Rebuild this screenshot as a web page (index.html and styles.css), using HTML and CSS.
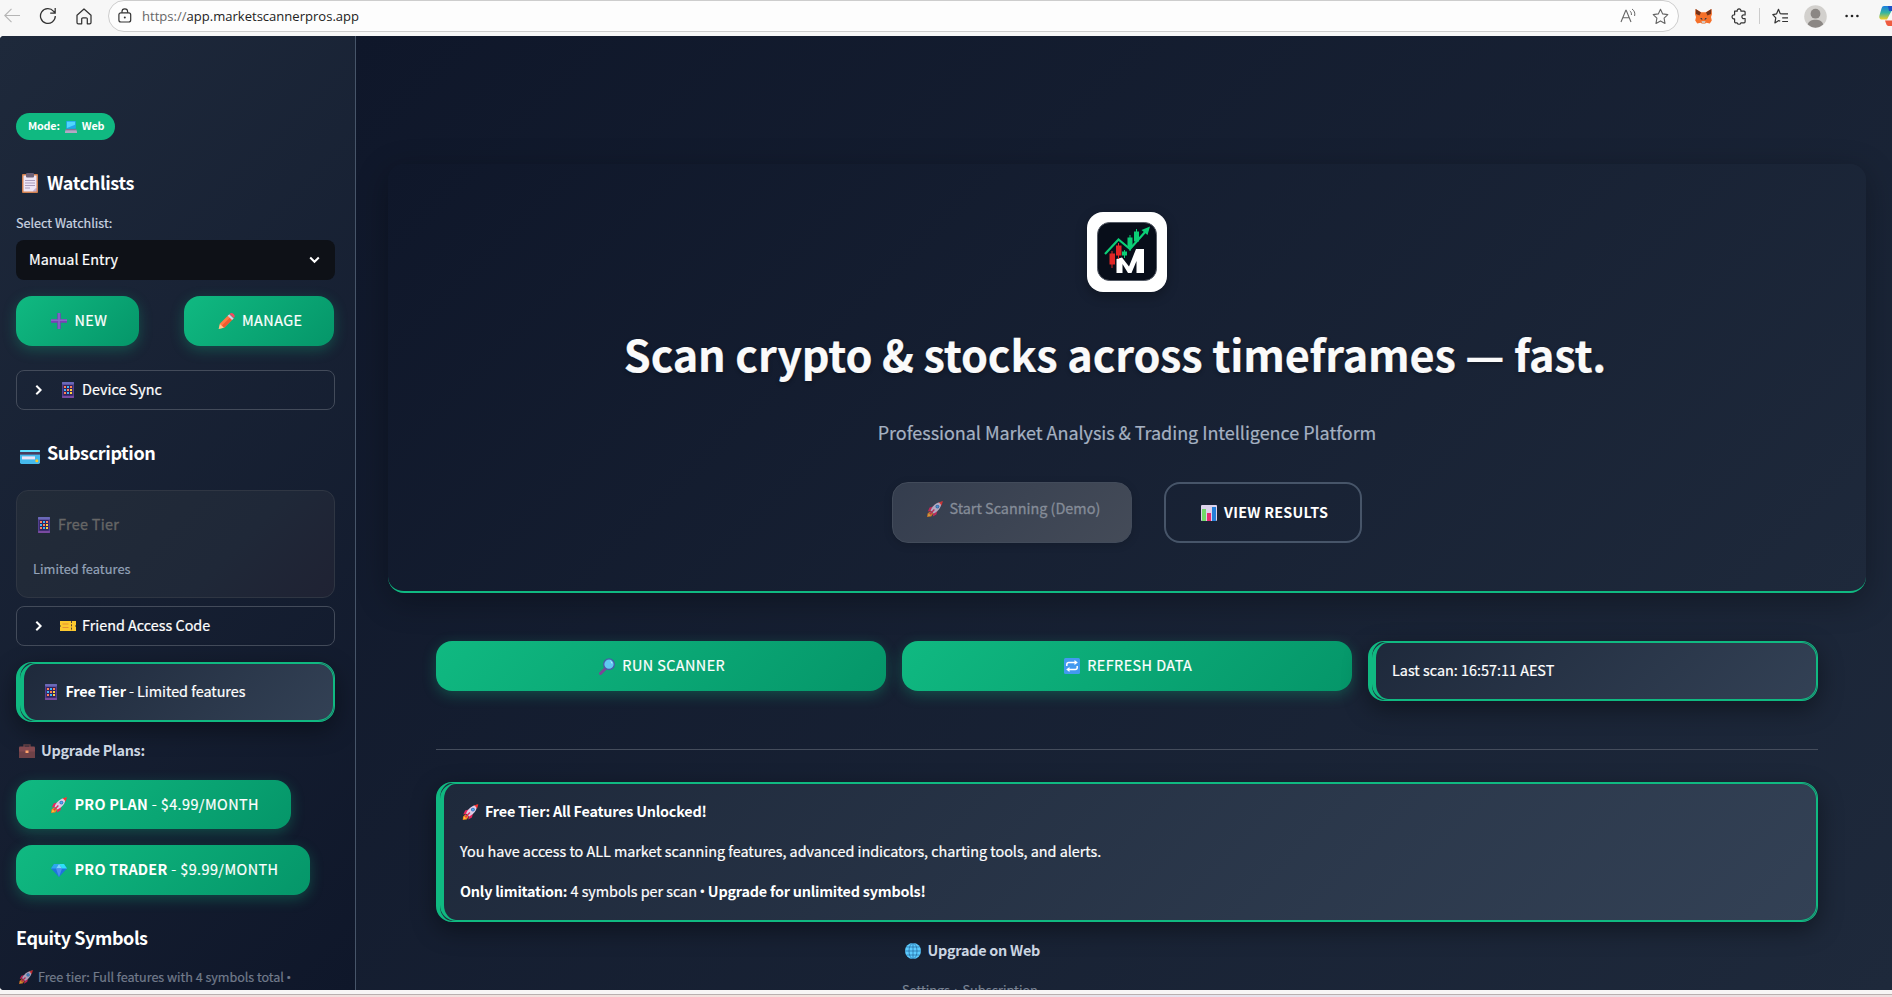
FILE: index.html
```html
<!DOCTYPE html>
<html lang="en">
<head>
<meta charset="utf-8">
<title>Market Scanner Pros</title>
<link rel="stylesheet" href="styles.css">
</head>
<body>
<svg class="defs" width="0" height="0">
  <defs>
    <symbol id="rocket" viewBox="0 0 16 16">
      <path d="M3.2 10.2 .6 12.6 0 16l4.2-.6 2-2.8z" fill="#f58220"/><path d="M1.6 12.6 1 15.2l2.6-.8z" fill="#ffc83d"/>
      <path d="M6.2 5.6 2.6 6.6.8 10.4l3.6-.6zM10.4 9.8 9.4 13.4 5.8 15.6l.6-4z" fill="#e8265e"/>
      <path d="M3.6 9.4C5.4 5 9 1.6 14.6.8 14.6 6.4 11 10.6 6.6 12.4z" fill="#dccde6"/>
      <path d="M11.4 1.6 16 0l-1.5 4.8C14 3.4 12.8 2.2 11.4 1.6z" fill="#f8312f"/>
      <circle cx="10.4" cy="5.6" r="1.9" fill="#3b6fc4"/><circle cx="10.4" cy="5.6" r="1.1" fill="#4db5f0"/>
      <path d="M7.4 8.6 3 13" stroke="#e8265e" stroke-width="1.4"/>
    </symbol>
    <symbol id="phone" viewBox="0 0 12 16">
      <rect width="12" height="16" rx="1" fill="#52408f"/><rect x="0" y="0" width="12" height="2.4" rx=".8" fill="#6a69b8"/><rect x="1.3" y="3" width="9.4" height="10.6" fill="#32235c"/><rect y="14" width="12" height="2" rx=".8" fill="#7a4aa0"/>
      <g fill="#ff8257"><rect x="2" y="4" width="2" height="2"/><rect x="8" y="4" width="2" height="2"/><rect x="5" y="7" width="2" height="2"/><rect x="2" y="10" width="2" height="2"/></g>
      <g fill="#3fb8f5"><rect x="5" y="4" width="2" height="2"/><rect x="2" y="7" width="2" height="2"/><rect x="5" y="10" width="2" height="2"/></g>
      <g fill="#ffd23e"><rect x="8" y="7" width="2" height="2"/><rect x="8" y="10" width="2" height="2"/></g>
    </symbol>
  </defs>
</svg>

<header class="browser">
  <svg class="b-back" width="16" height="16" viewBox="0 0 16 16"><path d="M16 7.5H.8M7.5 .8.8 7.5l6.7 6.7" fill="none" stroke="#b5b5b5" stroke-width="1.1"/></svg>
  <svg class="b-reload" width="18" height="18" viewBox="0 0 18 18"><path d="M16.3 9A7.4 7.4 0 1 1 14.6 4.3L16.2 6M16.2 1v5h-5" fill="none" stroke="#333" stroke-width="1.25"/></svg>
  <svg class="b-home" width="16" height="17" viewBox="0 0 16 17"><path d="M1 7.2 8 1l7 6.2v7.3a1.3 1.3 0 0 1-1.3 1.3h-2.4V11a1.2 1.2 0 0 0-1.2-1.2H6.900A1.2 1.2 0 0 0 5.700 11v4.800H2.300A1.3 1.3 0 0 1 1 14.500z" fill="none" stroke="#333" stroke-width="1.25" stroke-linejoin="round"/></svg>
  <div class="address">
    <svg width="14" height="16" viewBox="0 0 14 16"><rect x=".9" y="4.8" width="11.800" height="9.200" rx="2" fill="none" stroke="#333" stroke-width="1.2"/><path d="M4 4.800V3.600a2.800 2.800 0 0 1 5.600 0v1.200" fill="none" stroke="#333" stroke-width="1.200"/><circle cx="6.800" cy="9.400" r="1" fill="#333"/></svg>
    <div class="url"><span class="scheme">https://</span>app.marketscannerpros.app</div>
    <svg class="b-read" width="17" height="16" viewBox="0 0 17 16"><path d="M1 14 5.800 2.200h.4L11 14M2.800 9.800h6.400" fill="none" stroke="#666" stroke-width="1.100"/><path d="M9.800 3c1.400.8 1.800 2.300 1.600 4M12 1c2.200 1.400 3.400 4 2.600 7" fill="none" stroke="#666" stroke-width="1"/></svg>
    <svg width="17" height="17" viewBox="0 0 17 17"><path d="m8.500 1.200 2.200 4.700 5.100.7-3.700 3.600.9 5.200-4.500-2.500L4 15.400l.9-5.200L1.200 6.600l5.100-.7z" fill="none" stroke="#666" stroke-width="1.100" stroke-linejoin="round"/></svg>
  </div>
  <svg class="b-fox" width="17" height="15" viewBox="0 0 17 15"><path d="m.6 0 5.600 3.200h4.600L16.400 0 17 5l-1 3 .8 3.500-2 3-3.400-.8-1.600 1H7.200l-1.600-1-3.400.8-2-3L1 8 0 5z" fill="#f5702a"/><path d="M.6 0 6 3.400 4.500 6.600 1 5zM16.400 0 11 3.400l1.500 3.200L16 5z" fill="#73321b"/><path d="M5 9.500 7 9l.4 2zM12 9.500 10 9l-.4 2z" fill="#25344d"/><path d="M6.500 12h4l-.6 2.600H7.100z" fill="#d6c5bb"/></svg>
  <svg class="b-ext" width="16" height="17" viewBox="0 0 16 17"><path d="M3.600 3.200h2.600a1.900 1.900 0 1 1 3.700 0h3.200a1 1 0 0 1 1 1V7h-1a1.800 1.800 0 1 0 0 3.500h1v3.300a1 1 0 0 1-1 1H9.900a1.900 1.900 0 0 1-3.700 0H4.600a1 1 0 0 1-1-1v-2.900a2.100 2.100 0 1 1 0-4.100z" fill="none" stroke="#333" stroke-width="1.200" stroke-linejoin="round"/></svg>
  <i class="b-divider"></i>
  <svg class="b-fav" width="17" height="17" viewBox="0 0 17 17"><path d="M10.500 5.800 8.200 5.600 6.500 1.300 4.600 5.800.8 6.600l3 3.300-.9 5 3.900-2.400 1.400.8M10.500 5.800H16M10.200 9.800H16M10.200 13.500H16" fill="none" stroke="#333" stroke-width="1.200" stroke-linejoin="round"/></svg>
  <svg class="b-user" width="23" height="23" viewBox="0 0 23 23"><circle cx="11.500" cy="11.500" r="11.300" fill="#d2d0cd"/><circle cx="11.500" cy="8.700" r="4.900" fill="#8b8784"/><path d="M3.800 19.600C4.600 16 8 14.800 11.500 14.800s6.900 1.200 7.700 4.800a11.300 11.300 0 0 1-15.400 0z" fill="#8b8784"/></svg>
  <svg class="b-more" width="14" height="4" viewBox="0 0 14 4"><g fill="#222"><circle cx="1.600" cy="2" r="1.300"/><circle cx="7" cy="2" r="1.300"/><circle cx="12.400" cy="2" r="1.300"/></g></svg>
  <svg class="b-copilot" width="13" height="20" viewBox="0 0 13 20"><defs><linearGradient id="cp" x2="0" y2="1"><stop offset="0" stop-color="#1b7fe0"/><stop offset=".5" stop-color="#35b5a0"/><stop offset="1" stop-color="#f5cf22"/></linearGradient></defs><path d="M5 0h8v4L8 13.500H3C0 13.500 0 11 .6 9L2.500 2.500C3 .8 3.800 0 5 0z" fill="url(#cp)"/><path d="M9 0h4v5h-3z" fill="#1d50c5"/><path d="M6 14.500h7V20H9.500C7.500 20 7 17 6 14.500z" fill="#ee5b3f"/></svg>
</header>

<div class="app">
  <aside class="sidebar">
    <div class="mode"><span>Mode:</span>
      <svg width="12" height="12" viewBox="0 0 12 12"><rect x="1.200" width="9.600" height="7.800" rx=".6" fill="#23a5ee"/><path d="M2 .8h8v3L2 7z" fill="#4fd6ff"/><path d="M1 8h10l1 2.500V12H0v-1.500z" fill="#b3a8c4"/><path d="M1 8.300h10l.5 1H.5z" fill="#6e6488"/></svg>
      <span>Web</span></div>
    <h3 class="side-title watch">
      <svg width="16" height="20" viewBox="0 0 16 20"><rect y="1" width="16" height="19" rx="1" fill="#d28150"/><path d="M1.500 2.500h13V15L11 18.500H1.500z" fill="#eee6f6"/><path d="M14.500 14.500V18.500H10.500z" fill="#c3b0d6"/><rect x="4" width="8" height="4.400" rx="1" fill="#6d6177"/><path d="M3 7.500h10M3 10h10M3 12.500h10M3 15h5" stroke="#aa9cbc" stroke-width="1"/></svg>
      <span>Watchlists</span></h3>
    <label class="label">Select Watchlist:</label>
    <div class="select"><span>Manual Entry</span><svg width="11" height="8" viewBox="0 0 11 8"><path d="m1.200 1.500 4.300 4.300 4.300-4.300" fill="none" stroke="#fff" stroke-width="2"/></svg></div>
    <div class="pair">
      <button class="btn new"><svg width="16" height="16" viewBox="0 0 16 16"><path d="M8 0v16M0 8h16" stroke="#7a3fb8" stroke-width="3.400"/><path d="M8 0v16M0 7.300h16" stroke="#8868c8" stroke-width="1.600"/></svg><span>NEW</span></button>
      <button class="btn manage"><svg width="17" height="16" viewBox="0 0 17 16"><path d="M2 10.500 10.500 2l4.200 4.200-8.500 8.500L1 15.800z" fill="#ff7b45"/><path d="M4 12.500 12.500 4l2.200 2.200-8.500 8.500z" fill="#f1592f"/><path d="m9.700 2.800 1.600-1.600 4.400 4.200-1.700 1.600z" fill="#d8cce5"/><path d="M11.600 1c1.400-1.600 3-.9 4-.1 1.100 1 1.700 2.600.2 4.200z" fill="#f8485e"/><path d="m1.900 11-1.300 5 5.200-1.300z" fill="#ffc68c"/></svg><span>MANAGE</span></button>
    </div>
    <div class="expander gap24"><svg class="chev" width="8" height="12" viewBox="0 0 8 12"><path d="m1.300 1.700 4.300 4.300-4.300 4.300" fill="none" stroke="#fff" stroke-width="2"/></svg><svg class="e-ico" width="12" height="16"><use href="#phone"/></svg><span>Device Sync</span></div>
    <h3 class="side-title subs">
      <svg width="20" height="14" viewBox="0 0 20 14"><rect width="20" height="14" rx="1.400" fill="#45b9ec"/><rect width="20" height="2" rx="1" fill="#61dfff"/><rect y="2" width="20" height="2.600" fill="#4a3b5c"/><rect x="2" y="6.400" width="13" height="3" fill="#ece4f5"/><circle cx="16.800" cy="10.800" r="1.500" fill="#ffc928"/></svg>
      <span>Subscription</span></h3>
    <div class="tier-card">
      <div class="tier-name"><svg width="12" height="16"><use href="#phone"/></svg><span>Free Tier</span></div>
      <div class="tier-note">Limited features</div>
    </div>
    <div class="expander gap8"><svg class="chev" width="8" height="12" viewBox="0 0 8 12"><path d="m1.300 1.700 4.300 4.300-4.300 4.300" fill="none" stroke="#fff" stroke-width="2"/></svg><svg class="e-ico" width="16" height="10" viewBox="0 0 16 10"><path d="M0 0h16v4.200a.8.8 0 0 0 0 1.600V10H0V5.800a.8.8 0 0 0 0-1.600z" fill="#fcc92f"/><path d="M11.500 0v10" stroke="#54433c" stroke-dasharray="2 1.300"/><path d="M2.500 3h6M2.500 6.500h6" stroke="#e58f35" stroke-width="1.200"/></svg><span>Friend Access Code</span></div>
    <div class="alert side-alert"><div class="alert-in"><svg width="12" height="16"><use href="#phone"/></svg><span><b>Free Tier</b> - Limited features</span></div></div>
    <div class="plans"><svg width="16" height="14" viewBox="0 0 16 14"><path d="M5 3V1h6v2" fill="none" stroke="#664044" stroke-width="1.400"/><rect y="2.500" width="16" height="11.500" rx="1" fill="#834a50"/><path d="M0 7.500h16V14H0z" fill="#6e4147"/><rect x="6.500" y="6.500" width="3" height="2.500" fill="#ffa36a"/></svg><span>Upgrade Plans:</span></div>
    <button class="btn pro"><svg width="16" height="16"><use href="#rocket"/></svg><span><b>PRO PLAN</b> - $4.99/MONTH</span></button>
    <button class="btn trader"><svg width="16" height="13" viewBox="0 0 16 13"><path d="M3 0h10l3 4.500L8 13 0 4.500z" fill="#1f74dd"/><path d="M3 0h5L5 4.500H0z" fill="#2ca8ee"/><path d="M8 0h5l3 4.500h-5z" fill="#2de0f5"/><path d="m8 0 3 4.500H5z" fill="#79d4ff"/><path d="M5 4.500h6L8 13z" fill="#4b8ff0"/></svg><span><b>PRO TRADER</b> - $9.99/MONTH</span></button>
    <h3 class="side-title equity"><span>Equity Symbols</span></h3>
    <div class="foot"><svg width="14" height="14"><use href="#rocket"/></svg><div>Free tier: Full features with 4 symbols total <i class="dot">•</i></div></div>
  </aside>

  <main class="main">
    <section class="hero">
      <div class="logo"><svg width="60" height="59" viewBox="0 0 60 59">
        <rect x=".5" y=".5" width="59" height="58" rx="12" fill="#080e1a" stroke="#555b66"/>
        <path d="M19.500 51V37l5.500-1.500 7 9 7-17.500h8V51h-7.500V39L34.500 51h-3.500l-5.500-9v9z" fill="#fff"/>
        <g fill="#e22626" stroke="#e22626"><path d="M15 29v17M21.500 21v16"/><rect x="13" y="32" width="4.500" height="10"/><rect x="19.500" y="24" width="4.500" height="9"/></g>
        <g fill="#0bcf76" stroke="#0bcf76"><path d="M27.500 28v8M33 13v16M39.500 7v13"/><rect x="25.500" y="30" width="4" height="3"/><rect x="31" y="16" width="4" height="9"/><rect x="37.500" y="10" width="4" height="9"/></g>
        <path d="m8 32 13.500-14.500L33 27 49 9" fill="none" stroke="#0bcf76" stroke-width="2.200"/><path d="m44.500 8 8.500-3.500-2.500 8.500z" fill="#0bcf76"/>
      </svg></div>
      <h1 class="hero-title">Scan crypto &amp; stocks across timeframes — fast.</h1>
      <p class="hero-sub">Professional Market Analysis &amp; Trading Intelligence Platform</p>
      <div class="hero-actions">
        <div class="demo"><svg width="16" height="16"><use href="#rocket"/></svg><span>Start Scanning (Demo)</span></div>
        <div class="results"><svg width="16" height="16" viewBox="0 0 16 16"><rect width="16" height="16" rx="1" fill="#ddd3ec"/><rect x="1" y="4" width="4" height="12" fill="#71d968"/><rect x="6" y="8" width="4" height="8" fill="#e52b70"/><rect x="11" y="2" width="4" height="14" fill="#257ed8"/></svg><span>VIEW RESULTS</span></div>
      </div>
    </section>
    <div class="content">
      <div class="actions">
        <button class="btn wide"><svg width="16" height="17" viewBox="0 0 16 17"><path d="m1.500 15.500 5-5" stroke="#7d4597" stroke-width="3" stroke-linecap="round"/><circle cx="10" cy="6.200" r="5.300" fill="#5fc9f2" stroke="#4a5ba8" stroke-width="1.300"/><path d="M11.500 3a3 3 0 0 1 1.500 2.500" stroke="#c9f3ff" fill="none"/></svg><span>RUN SCANNER</span></button>
        <button class="btn wide"><svg width="16" height="16" viewBox="0 0 16 16"><rect width="16" height="16" rx="1.500" fill="#4299f0"/><path d="M2.800 8V6.500a2 2 0 0 1 2-2H12M13.200 8v1.500a2 2 0 0 1-2 2H4" fill="none" stroke="#fff" stroke-width="1.500"/><path d="m10.500 2 3.300 2.500L10.500 7zM5.500 9l-3.300 2.500L5.500 14z" fill="#fff"/></svg><span>REFRESH DATA</span></button>
        <div class="alert"><div class="alert-in scan"><span>Last scan: 16:57:11 AEST</span></div></div>
      </div>
      <div class="rule"></div>
      <div class="alert info"><div class="alert-in col">
        <div class="info-row head"><svg width="17" height="16" viewBox="0 0 16 16"><use href="#rocket"/></svg><b>Free Tier: All Features Unlocked!</b></div>
        <div class="info-row">You have access to ALL market scanning features, advanced indicators, charting tools, and alerts.</div>
        <div class="info-row"><b>Only limitation:</b> 4 symbols per scan <i class="dot">•</i> <b>Upgrade for unlimited symbols!</b></div>
      </div></div>
      <div class="web"><svg width="16" height="16" viewBox="0 0 16 16"><circle cx="8" cy="8" r="8" fill="#5ccbff"/><path d="M8 0v16M0 8h16M1.500 4h13M1.500 12h13" stroke="#1c5a90" stroke-width=".6"/><ellipse cx="8" cy="8" rx="4" ry="7.800" fill="none" stroke="#1c5a90" stroke-width=".6"/></svg><span>Upgrade on Web</span></div>
      <div class="settings">Settings <i class="sep">›</i> Subscription</div>
    </div>
  </main>
</div>
<footer class="edge"></footer>
</body>
</html>
```

FILE: styles.css
```css
* { box-sizing: border-box; }
body { margin: 0; width: 1892px; height: 997px; overflow: hidden; font-family: "Noto Sans CJK SC", "Noto Sans", sans-serif; font-size: 14.4px; color: #fff; background: #f7f7f7; -webkit-text-stroke: .2px; }
h1, h3, p { margin: 0; }
svg { display: block; flex: none; }
.defs { display: none; }
span, b, h1, label { white-space: nowrap; }
b { font-weight: 700; letter-spacing: -.22px; -webkit-text-stroke: 0; }
i { font-style: normal; }
.dot { font-family: "Open Sans", sans-serif; font-size: 1.050em; line-height: 1; margin: 0 -.55px; }
.sep { font-family: "Open Sans", sans-serif; line-height: 1; padding: 0 1.500px; }

.browser { display: flex; align-items: center; height: 36px; background: #f7f7f7; padding-left: 4px; padding-bottom: 4px; }
.b-reload { margin-left: 19px; }
.b-home { margin-left: 19px; }
.address { display: flex; flex: none; align-items: center; align-self: flex-start; width: 1571px; height: 32px; margin-left: 16px; padding: 0 9px; background: #fdfdfd; border: 1px solid #cdcdcd; border-radius: 16px; }
.url { flex: 1; margin-left: 10px; font-family: "Open Sans", sans-serif; font-size: 13.050px; color: #222; -webkit-text-stroke: 0; }
.scheme { color: #666; }
.b-read { margin-right: 15px; }
.b-fox { margin-left: 16px; }
.b-ext { margin-left: 19px; }
.b-divider { width: 1px; height: 16px; margin-left: 12px; background: #ccc; }
.b-fav { margin-left: 12px; }
.b-user { margin-left: 15px; }
.b-more { margin-left: 18px; }
.b-copilot { margin-left: 20px; }

.app { display: flex; height: 954px; overflow: hidden; border-radius: 4px 0 0 4px; background: #0f172a; }
.sidebar { width: 356px; height: 954px; flex: none; overflow: hidden; padding: 77px 20px 0 16px; border-right: 1px solid #475569; background: linear-gradient(135deg, #1e293b 0%, #0f172a 100%); }
.mode { display: flex; align-items: center; gap: 5px; width: 99px; height: 27px; padding-left: 12px; border-radius: 14px; background: #10b981; font-size: 10.8px; font-weight: 700; line-height: 25px; letter-spacing: -.2px; -webkit-text-stroke: 0; }
.mode span { padding-bottom: 2px; }
.side-title { display: flex; align-items: center; height: 28px; font-size: 18px; font-weight: 700; line-height: 26px; letter-spacing: -.36px; -webkit-text-stroke: 0; }
.side-title span, .select span, .btn span, .expander span, .tier-name span, .alert-in span, .plans span, .web span, .results span, .head b { padding-bottom: 2px; }
.watch { margin-top: 29px; padding-left: 6px; gap: 9px; }
.subs { margin-top: 30px; padding-left: 4px; gap: 7px; }
.subs svg { margin-top: 5px; }
.side-title.subs span { padding-bottom: 4px; }
.equity { margin-top: 29px; letter-spacing: -.44px; }
.label { display: block; height: 20px; margin-top: 16px; font-size: 12.6px; line-height: 20px; color: #cbd5e1; }
.select { display: flex; align-items: center; justify-content: space-between; width: 319px; height: 40px; margin-top: 7px; padding: 0 15px 0 13px; border-radius: 8px; background: #0e1117; line-height: 38px; }
.pair { display: flex; justify-content: space-between; width: 318px; margin-top: 16px; }
.btn { display: flex; align-items: center; height: 50px; margin: 0; padding: 0 0 0 35px; gap: 7.500px; border: 0; border-radius: 16px; background: linear-gradient(135deg, #10b981 0%, #059669 100%); box-shadow: 0 4px 14px rgba(16, 185, 129, .3); color: #fff; font-family: inherit; font-size: 14.4px; line-height: 24px; letter-spacing: .43px; -webkit-text-stroke: .2px; }
.btn b { letter-spacing: .24px; }
.new { width: 123px; }
.manage { width: 150px; padding-left: 34px; gap: 7px; }
.expander { display: flex; align-items: center; width: 319px; height: 40px; padding-left: 18px; border: 1px solid #434b5a; border-radius: 8px; line-height: 36px; }
.gap24 { margin-top: 24px; }
.gap8 { margin-top: 8px; }
.e-ico { margin-left: 19px; margin-right: 8px; }
.gap8 .e-ico { margin-left: 17px; margin-right: 6px; }
.tier-card { width: 319px; height: 108px; margin-top: 22px; padding: 22px 16px 0; border: 1px solid #2f3643; border-radius: 12px; background: linear-gradient(135deg, #222b38, #1f2838 65%, #1f2233); }
.tier-name { display: flex; align-items: center; gap: 8px; height: 24px; padding-left: 5px; line-height: 24px; color: #666; letter-spacing: .3px; -webkit-text-stroke: .35px; }
.tier-note { height: 20px; margin-top: 22px; font-size: 12.8px; line-height: 20px; color: #94a3b8; letter-spacing: .05px; }
.alert { height: 60px; border: 1px solid #10b981; border-left-width: 4px; border-radius: 16px; background: linear-gradient(135deg, #1e293b 0%, #334155 100%); box-shadow: 0 8px 24px rgba(0, 0, 0, .4); }
.alert-in { display: flex; align-items: center; height: 100%; border: 1px solid #10b981; border-left-width: 4px; border-radius: 16px; padding-left: 21px; gap: 8.500px; line-height: 24px; }
.side-alert { width: 319px; margin-top: 16px; letter-spacing: -.03px; }
.plans { display: flex; align-items: center; gap: 6px; height: 24px; margin-top: 17px; padding-left: 3px; line-height: 24px; font-weight: 700; color: #cbd5e1; letter-spacing: -.26px; -webkit-text-stroke: 0; }
.pro { width: 275px; height: 49px; margin-top: 17px; }
.trader { width: 294px; margin-top: 16px; }
.foot { display: flex; align-items: center; gap: 5px; height: 20px; margin-top: 15px; padding-left: 3px; font-size: 12.6px; line-height: 20px; color: #727b8b; white-space: nowrap; letter-spacing: -.03px; }
.foot svg { opacity: .75; }

.main { flex: 1; height: 954px; overflow: hidden; padding: 128px 26px 0 32px; background: linear-gradient(135deg, #0f172a 0%, #1e293b 100%); }
.hero { display: flex; flex-direction: column; align-items: center; height: 429px; padding-top: 48px; border-bottom: 2px solid #10b981; border-radius: 16px; background: linear-gradient(135deg, #0f172a 0%, #1e293b 100%); box-shadow: 0 8px 32px rgba(0, 0, 0, .3); }
.logo { width: 80px; height: 80px; padding: 10px; border-radius: 16px; background: #fff; box-shadow: 0 4px 12px rgba(0, 0, 0, .3); }
.hero-title { height: 58px; margin-top: 35px; padding-right: 24px; font-size: 43.2px; font-weight: 700; line-height: 52px; letter-spacing: -.15px; color: #fafafa; text-shadow: 0 2px 4px rgba(0, 0, 0, .3); }
.hero-sub { height: 30px; margin-top: 33px; font-size: 18px; line-height: 28px; letter-spacing: -.04px; color: #a5b1c2; white-space: nowrap; }
.hero-actions { display: flex; gap: 32px; margin-top: 34px; }
.demo { display: flex; gap: 6.500px; width: 240px; height: 61px; padding: 18px 0 0 34px; border: 1px solid #424b5a; border-radius: 16px; background: linear-gradient(135deg, #343d4e, #444b58); box-shadow: 0 2px 8px rgba(0, 0, 0, .15); color: #858c98; line-height: 14px; letter-spacing: 0; -webkit-text-stroke: .3px; }
.demo svg { opacity: .75; }
.results { display: flex; align-items: center; gap: 7px; width: 198px; height: 61px; padding-left: 35px; border: 2px solid #475569; border-radius: 16px; font-weight: 700; letter-spacing: .25px; -webkit-text-stroke: 0; }
.content { padding: 48px 48px 0; }
.actions { display: grid; grid-template-columns: repeat(3, 450px); gap: 16px; }
.wide { justify-content: center; padding: 0 0 0 2px; }
.scan { padding-left: 16px; }
.rule { height: 1px; margin-top: 48px; background: #454d5c; }
.info { width: 1382px; height: 140px; margin-top: 32px; }
.col { flex-direction: column; align-items: flex-start; gap: 16px; padding: 16px 0 0 16px; letter-spacing: -.03px; }
.info-row { height: 24px; line-height: 22px; white-space: nowrap; }
.head { display: flex; align-items: center; gap: 6px; padding-left: 2px; }
.web { display: flex; align-items: center; gap: 6.500px; height: 24px; margin: 17px 0 0 469px; line-height: 24px; font-weight: 700; color: #cbd5e1; letter-spacing: -.26px; -webkit-text-stroke: 0; }
.settings { height: 20px; margin: 17px 0 0 466px; font-size: 12.7px; line-height: 20px; color: #7a8494; white-space: nowrap; }
.edge { height: 7px; border-top: 4px solid #f7f5f5; background: linear-gradient(90deg, #f0dede, #f3e3dd 50%, #e5e3ee 60%, #efdfdf); box-shadow: inset 0 1px #b9b0b0; }
```
